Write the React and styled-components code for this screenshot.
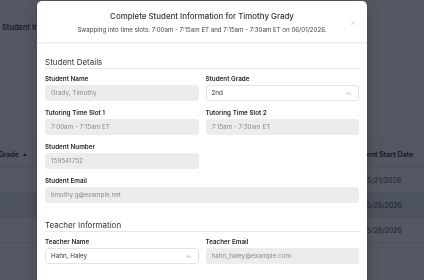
import React from 'react'
import styled, { createGlobalStyle } from 'styled-components'
import { ChevronUp, X } from 'lucide-react'

const GlobalStyle = createGlobalStyle`
  html, body {
    margin: 0;
    padding: 0;
    background: #ffffff;
    font-family: Inter, "Liberation Sans", sans-serif;
  }
  * { box-sizing: border-box; }
`

const Page = styled.div`
  padding-top: 23px;
  height: 280px;
  overflow: hidden;
`

const PageTitle = styled.h1`
  margin: 0 0 0 2px;
  font-size: 7.5px;
  line-height: 10px;
  font-weight: 500;
  color: #111827;
`

const Table = styled.div`
  margin-top: 107px;
  border-top: 1px solid #e5e7eb;
`

const Row = styled.div`
  display: grid;
  grid-template-columns: 30px 1fr 84px;
  align-items: center;
  height: ${props => props.$header ? '27px' : '25px'};
  background: ${props => props.$shade || '#ffffff'};
  border-bottom: 1px solid #e5e7eb;
`

const Cell = styled.div`
  display: flex;
  justify-content: ${props => props.$end ? 'flex-end' : 'center'};
  align-items: center;
  gap: 4px;
  padding-right: ${props => props.$end ? '3px' : '0'};
  white-space: nowrap;
  font-size: 7px;
  font-weight: ${props => props.$bold ? 600 : 400};
  color: ${props => props.$bold ? '#111827' : '#374151'};
`

const SortMark = styled.span`
  font-size: 4px;
`

const Overlay = styled.div`
  position: fixed;
  inset: 0;
  background: rgba(17, 24, 39, 0.72);
  display: flex;
  justify-content: center;
  align-items: flex-start;
  padding: 1px 20px 0 0;
`

const Dialog = styled.div`
  position: relative;
  width: 330px;
  height: 320px;
  background: #ffffff;
  border-radius: 5px;
  box-shadow: 0 4px 14px rgba(0, 0, 0, 0.25);
  overflow: hidden;
`

const DialogHeader = styled.div`
  padding: 9px 10px 8px;
  border-bottom: 1px solid #ececec;
  box-shadow: 0 1px 1px rgba(0, 0, 0, 0.03);
  text-align: center;
`

const DialogTitle = styled.h2`
  margin: 0;
  font-size: 7.9px;
  line-height: 12px;
  font-weight: 500;
  color: #333333;
`

const DialogSubtitle = styled.p`
  margin: 3px 0 0;
  font-size: 6.15px;
  line-height: 9px;
  color: #444444;
`

const CloseButton = styled.button`
  position: absolute;
  top: 17px;
  right: 10px;
  width: 9px;
  height: 9px;
  padding: 0;
  border: 0;
  background: none;
  color: #bdbdbd;
  display: flex;
  align-items: center;
  justify-content: center;
`

const DialogBody = styled.div`
  padding: 14px 8px 0;
`

const SectionTitle = styled.h3`
  margin: ${props => props.$first ? '0' : '17px'} 0 5px;
  font-size: 8px;
  line-height: 11px;
  font-weight: 400;
  color: #333333;
  border-bottom: 1px solid #e6e6e6;
`

const FieldGrid = styled.div`
  display: grid;
  grid-template-columns: 1fr 1fr;
  column-gap: 7px;
  row-gap: 7px;
`

const Field = styled.div`
  display: flex;
  flex-direction: column;
  gap: 1px;
  grid-column: ${props => props.$wide ? '1 / -1' : 'auto'};
`

const Label = styled.label`
  font-size: 6.3px;
  line-height: 10px;
  font-weight: 600;
  color: #2a2438;
`

const Input = styled.input`
  height: 16px;
  width: 100%;
  padding: 0 5px;
  border: 1px solid #ececec;
  border-radius: 3px;
  background: #ececec;
  font-family: inherit;
  font-size: 6.3px;
  color: #8a8a8a;
  outline: none;
`

const Select = styled.button`
  height: 16px;
  width: 100%;
  padding: 0 6px 0 5px;
  border: 1px solid #e3e3e3;
  border-radius: 3px;
  background: #ffffff;
  display: flex;
  align-items: center;
  justify-content: space-between;
  font-family: inherit;
  font-size: 6.3px;
  color: #333333;
`

const rows = [
  { date: '05/21/2026', shade: '#ffffff' },
  { date: '05/28/2026', shade: '#e7e8ec' },
  { date: '05/28/2026', shade: '#ffffff' },
]

const ReadOnlyField = ({ label, value, wide }) => (
  <Field $wide={wide}>
    <Label>{label}</Label>
    <Input value={value} readOnly />
  </Field>
)

const SelectField = ({ label, value }) => (
  <Field>
    <Label>{label}</Label>
    <Select type="button">
      <span>{value}</span>
      <ChevronUp size={7} strokeWidth={1.6} color="#555" />
    </Select>
  </Field>
)

const App = () => {
  return (
    <>
      <GlobalStyle />
      <Page>
        <PageTitle>Student Information</PageTitle>
        <Table>
          <Row $header $shade="#f9fafb">
            <Cell $end $bold>Grade <SortMark>▲</SortMark></Cell>
            <Cell $bold>Tutor</Cell>
            <Cell $bold>Student Start Date</Cell>
          </Row>
          {rows.map((row, i) => (
            <Row key={i} $shade={row.shade}>
              <Cell $end />
              <Cell>—</Cell>
              <Cell>{row.date}</Cell>
            </Row>
          ))}
        </Table>
      </Page>

      <Overlay>
        <Dialog>
          <DialogHeader>
            <DialogTitle>Complete Student Information for Timothy Grady</DialogTitle>
            <DialogSubtitle>
              Swapping into time slots: 7:00am - 7:15am ET and 7:15am - 7:30am ET on 06/01/2026.
            </DialogSubtitle>
            <CloseButton type="button" aria-label="Close">
              <X size={8} strokeWidth={1.4} />
            </CloseButton>
          </DialogHeader>

          <DialogBody>
            <SectionTitle $first>Student Details</SectionTitle>
            <FieldGrid>
              <ReadOnlyField label="Student Name" value="Grady, Timothy" />
              <SelectField label="Student Grade" value="2nd" />
              <ReadOnlyField label="Tutoring Time Slot 1" value="7:00am - 7:15am ET" />
              <ReadOnlyField label="Tutoring Time Slot 2" value="7:15am - 7:30am ET" />
              <ReadOnlyField label="Student Number" value="159541752" />
              <div />
              <ReadOnlyField label="Student Email" value="timothy.g@example.net" wide />
            </FieldGrid>

            <SectionTitle>Teacher Information</SectionTitle>
            <FieldGrid>
              <SelectField label="Teacher Name" value="Hahn, Haley" />
              <ReadOnlyField label="Teacher Email" value="hahn_haley@example.com" />
            </FieldGrid>
          </DialogBody>
        </Dialog>
      </Overlay>
    </>
  )
}

export default App
